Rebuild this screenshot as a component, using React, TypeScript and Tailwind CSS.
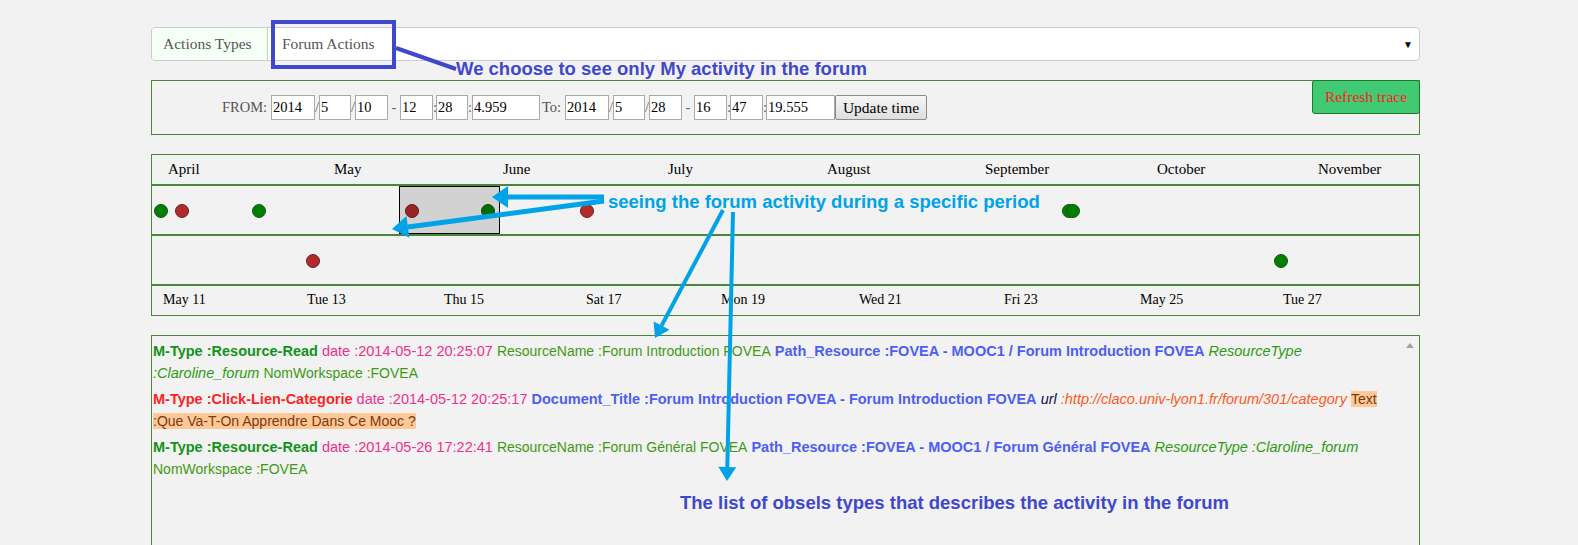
import React from "react";

const serif = "font-['Liberation_Serif',serif]";
const sans = "font-['Liberation_Sans',Arial,sans-serif]";

const months = [
  { label: "April", left: 16 },
  { label: "May", left: 182 },
  { label: "June", left: 351 },
  { label: "July", left: 516 },
  { label: "August", left: 675 },
  { label: "September", left: 833 },
  { label: "October", left: 1005 },
  { label: "November", left: 1166 },
];

const days = [
  { label: "May 11", left: 11 },
  { label: "Tue 13", left: 155 },
  { label: "Thu 15", left: 292 },
  { label: "Sat 17", left: 434 },
  { label: "Mon 19", left: 569 },
  { label: "Wed 21", left: 707 },
  { label: "Fri 23", left: 852 },
  { label: "May 25", left: 988 },
  { label: "Tue 27", left: 1131 },
];

type Dot = { x: number; c: "g" | "r" };
const row1: Dot[] = [
  { x: 9, c: "g" },
  { x: 30, c: "r" },
  { x: 107, c: "g" },
  { x: 260, c: "r" },
  { x: 336, c: "g" },
  { x: 435, c: "r" },
  { x: 917, c: "g" },
  { x: 921, c: "g" },
];
const row2: Dot[] = [
  { x: 161, c: "r" },
  { x: 1129, c: "g" },
];

function Dots({ items }: { items: Dot[] }) {
  return (
    <>
      {items.map((d, i) => (
        <span
          key={i}
          className={
            "absolute top-[18px] h-[14px] w-[14px] rounded-full border " +
            (d.c === "g" ? "border-[#1f4d1f] bg-[#008000]" : "border-[#6b2020] bg-[#b22a2a]")
          }
          style={{ left: d.x - 7 }}
        />
      ))}
    </>
  );
}

function Field({ v, w }: { v: string; w: string }) {
  return (
    <span className={`${w} flex h-[25px] shrink-0 items-center border border-[#a9a9a9] bg-white pl-[1px] text-black`}>{v}</span>
  );
}

function Sep({ s, w }: { s: string; w: string }) {
  return <span className={`${w} shrink-0 text-center text-[#666]`}>{s}</span>;
}

function arrow(x1: number, y1: number, x2: number, y2: number, L = 16, H = 11) {
  const dx = x2 - x1;
  const dy = y2 - y1;
  const len = Math.hypot(dx, dy);
  const ux = dx / len;
  const uy = dy / len;
  const bx = x2 - ux * L;
  const by = y2 - uy * L;
  const px = -uy * H;
  const py = ux * H;
  return {
    line: { x1, y1, x2: bx, y2: by },
    head: `${x2},${y2} ${bx + px},${by + py} ${bx - px},${by - py}`,
  };
}

const cyan = "#00a2e8";
const arrows = [
  { a: arrow(604, 197, 492, 197), w: 5 },
  { a: arrow(604, 201, 392, 229), w: 5 },
  { a: arrow(723, 210, 655, 338, 14, 9), w: 4 },
  { a: arrow(733, 212, 727, 481, 14, 9), w: 4 },
];

const plain = "text-[14px] text-[#3f9a12]";

export default function App() {
  return (
    <div className="relative h-[545px] w-full overflow-hidden bg-[#f2f2f2]">
      <div className="ml-[151px] w-[1269px] pt-[27px]">
        {/* action type selector */}
        <div className={`${serif} flex h-[34px] items-stretch rounded border border-[#cccccc] bg-white text-[15.5px] text-[#555]`}>
          <div className="flex w-[116px] items-center rounded-l border-r border-[#cccccc] bg-[#f5fff5] pl-[11px]">Actions Types</div>
          <div className="flex flex-1 items-center justify-between pl-[14px] pr-[6px]">
            <span>Forum Actions</span>
            <span className="text-[10px] text-black">▼</span>
          </div>
        </div>

        {/* time range */}
        <div className={`${serif} mt-[19px] flex h-[55px] items-start justify-between border border-[#4b873b] text-[14.5px]`}>
          <div className="flex items-center pl-[70px] pt-[14px]">
            <span className="w-[49px] shrink-0 text-[#555]">FROM:</span>
            <Field v="2014" w="w-[44px]" />
            <Sep s="/" w="w-[4px]" />
            <Field v="5" w="w-[32px]" />
            <Sep s="/" w="w-[4px]" />
            <Field v="10" w="w-[33px]" />
            <Sep s="-" w="w-[12px]" />
            <Field v="12" w="w-[33px]" />
            <Sep s=":" w="w-[3px]" />
            <Field v="28" w="w-[32px]" />
            <Sep s=":" w="w-[4px]" />
            <Field v="4.959" w="w-[68px]" />
            <span className="w-[25px] shrink-0 pl-[2px] text-[#555]">To:</span>
            <Field v="2014" w="w-[44px]" />
            <Sep s="/" w="w-[4px]" />
            <Field v="5" w="w-[32px]" />
            <Sep s="/" w="w-[4px]" />
            <Field v="28" w="w-[33px]" />
            <Sep s="-" w="w-[12px]" />
            <Field v="16" w="w-[33px]" />
            <Sep s=":" w="w-[3px]" />
            <Field v="47" w="w-[33px]" />
            <Sep s=":" w="w-[3px]" />
            <Field v="19.555" w="w-[69px]" />
            <button className="flex h-[25px] w-[92px] shrink-0 items-center justify-center rounded-[2px] border border-[#8a8a8a] bg-gradient-to-b from-[#f6f6f6] to-[#dedede] text-[15.5px] text-black">
              Update time
            </button>
          </div>
          <button className="-mr-px -mt-px h-[34px] w-[108px] rounded-[3px] border border-[#1d7a2a] bg-[#42c974] text-[15.5px] text-[#ff2020]">
            Refresh trace
          </button>
        </div>

        {/* timeline */}
        <div className={`${serif} mt-[19px] border border-[#4b873b] text-black`}>
          <div className="relative h-[31px] border-b-2 border-[#4b873b] text-[15px] leading-[17px]">
            {months.map((m) => (
              <span key={m.label} className="absolute top-[6px]" style={{ left: m.left }}>
                {m.label}
              </span>
            ))}
          </div>
          <div className="relative h-[50px] border-b-2 border-[#4b873b]">
            <Dots items={row1} />
            <div className="absolute left-[247px] top-0 h-[48px] w-[101px] border border-black bg-black/[0.13]" />
          </div>
          <div className="relative h-[50px] border-b-2 border-[#4b873b]">
            <Dots items={row2} />
          </div>
          <div className="relative h-[29px] text-[14px] leading-[17px]">
            {days.map((d) => (
              <span key={d.label} className="absolute top-[5px]" style={{ left: d.left }}>
                {d.label}
              </span>
            ))}
          </div>
        </div>

        {/* obsels list */}
        <div className={`${sans} relative mt-[19px] h-[230px] border border-[#4b873b] text-[14.5px] leading-[22px]`}>
          <span className="absolute right-[5px] top-[7px] h-0 w-0 border-x-[4px] border-b-[5px] border-x-transparent border-b-[#a3a3a3]" />
          <div className="w-[1236px] pl-[1px] pt-[4px]">
            <div className="mb-[4px]">
              <b className="text-[#12921a]">M-Type :Resource-Read</b> <span className="text-[#f0308c]">date :2014-05-12 20:25:07</span>{" "}
              <span className={plain}>ResourceName :Forum Introduction FOVEA</span>{" "}
              <b className="text-[#4d5ff2]">Path_Resource :FOVEA - MOOC1 / Forum Introduction FOVEA</b>{" "}
              <i className="text-[#2f9a12]">ResourceType :Claroline_forum</i>{" "}
              <span className={plain}>NomWorkspace :FOVEA</span>
            </div>
            <div className="mb-[4px]">
              <b className="text-[#ff1f1f]">M-Type :Click-Lien-Categorie</b> <span className="text-[#f0308c]">date :2014-05-12 20:25:17</span>{" "}
              <b className="text-[#4d5ff2]">Document_Title :Forum Introduction FOVEA - Forum Introduction FOVEA</b>{" "}
              <i className="text-[#101050]">url</i>{" "}
              <i className="text-[#ff5a1f]">:http://claco.univ-lyon1.fr/forum/301/category</i>{" "}
              <span className="bg-[#ffc897] text-[14px] text-[#7a3a12]">Text :Que Va-T-On Apprendre Dans Ce Mooc ?</span>
            </div>
            <div>
              <b className="text-[#12921a]">M-Type :Resource-Read</b> <span className="text-[#f0308c]">date :2014-05-26 17:22:41</span>{" "}
              <span className={plain}>ResourceName :Forum Général FOVEA</span>{" "}
              <b className="text-[#4d5ff2]">Path_Resource :FOVEA - MOOC1 / Forum Général FOVEA</b>{" "}
              <i className="text-[#2f9a12]">ResourceType :Claroline_forum</i>{" "}
              <span className={plain}>NomWorkspace :FOVEA</span>
            </div>
          </div>
        </div>
      </div>

      {/* annotations drawn over the screenshot */}
      <div className="pointer-events-none absolute left-[271px] top-[20px] h-[49px] w-[125px] border-4 border-[#3f48cc]" />
      <svg className="pointer-events-none absolute left-0 top-0" width="1578" height="545">
        <line x1="396" y1="48" x2="456" y2="69" stroke="#3f48cc" strokeWidth="4" />
        {arrows.map(({ a, w }, i) => (
          <g key={i}>
            <line {...a.line} stroke={cyan} strokeWidth={w} />
            <polygon points={a.head} fill={cyan} />
          </g>
        ))}
      </svg>
      <span className={`${sans} absolute left-[456px] top-[59px] text-[18.5px] font-bold leading-[20px] text-[#3f48cc]`}>
        We choose to see only My activity in the forum
      </span>
      <span className={`${sans} absolute left-[608px] top-[192px] text-[18.5px] font-bold leading-[20px] text-[#00a2e8]`}>
        seeing the forum activity during a specific period
      </span>
      <span className={`${sans} absolute left-[680px] top-[493px] text-[18.5px] font-bold leading-[20px] text-[#3f48cc]`}>
        The list of obsels types that describes the activity in the forum
      </span>
    </div>
  );
}
